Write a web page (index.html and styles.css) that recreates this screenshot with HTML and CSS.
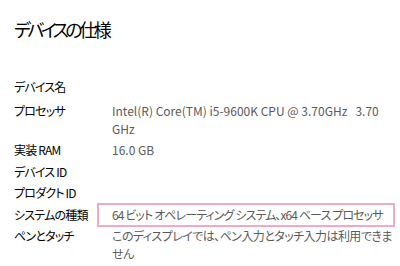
FILE: index.html
```html
<!DOCTYPE html>
<html lang="ja">
<head>
    <meta charset="UTF-8" />
    <meta name="viewport" content="width=device-width, initial-scale=1.0" />
    <title>デバイスの仕様</title>
    <link rel="stylesheet" href="styles.css">
</head>
<body>
    <div class="specs">
        <h1>デバイスの仕様</h1>

        <div class="spec-list">
            <div class="spec-row">
                <div class="spec-label">デバイス名</div>
                <div class="spec-value"></div>
            </div>
            <div class="spec-row">
                <div class="spec-label">プロセッサ</div>
                <div class="spec-value">Intel(R) Core(TM) i5-9600K CPU @ 3.70GHz&nbsp;&nbsp;&nbsp;3.70 GHz</div>
            </div>
            <div class="spec-row">
                <div class="spec-label">実装 RAM</div>
                <div class="spec-value">16.0 GB</div>
            </div>
            <div class="spec-row">
                <div class="spec-label">デバイス ID</div>
                <div class="spec-value"></div>
            </div>
            <div class="spec-row">
                <div class="spec-label">プロダクト ID</div>
                <div class="spec-value"></div>
            </div>
            <div class="spec-row">
                <div class="spec-label">システムの種類</div>
                <div class="spec-value highlight">64 ビット オペレーティング システム、x64 ベース プロセッサ</div>
            </div>
            <div class="spec-row">
                <div class="spec-label">ペンとタッチ</div>
                <div class="spec-value jp">このディスプレイでは、ペン入力とタッチ入力は利用できません</div>
            </div>
        </div>
    </div>
</body>
</html>
```

FILE: styles.css
```css
body {
    margin: 0;
    background: #ffffff;
    font-family: "Noto Sans CJK JP", sans-serif;
    font-feature-settings: "palt";
    color: #000000;
}
.specs {
    padding: 15px 5px 0 14px;
}
h1 {
    margin: 0;
    font-size: 18px;
    font-weight: 400;
    letter-spacing: -3.5px;
    line-height: 28px;
}
.spec-list {
    margin-top: 35px;
}
.spec-row {
    display: flex;
    font-size: 12px;
    line-height: 18px;
    margin-bottom: 3.5px;
}
.spec-row:first-child {
    margin-bottom: 5.5px;
}
.spec-label {
    width: 98px;
    flex-shrink: 0;
    letter-spacing: -0.8px;
}
.spec-value {
    flex: 1;
    min-height: 18px;
    color: #5a5a5a;
}
.spec-value.jp {
    letter-spacing: -0.55px;
}
.spec-value.highlight {
    border: 2px solid #f2a9c8;
    margin: -3px 0 -3px -15px;
    padding: 1px 0 1px 13px;
    letter-spacing: -0.9px;
}
```
